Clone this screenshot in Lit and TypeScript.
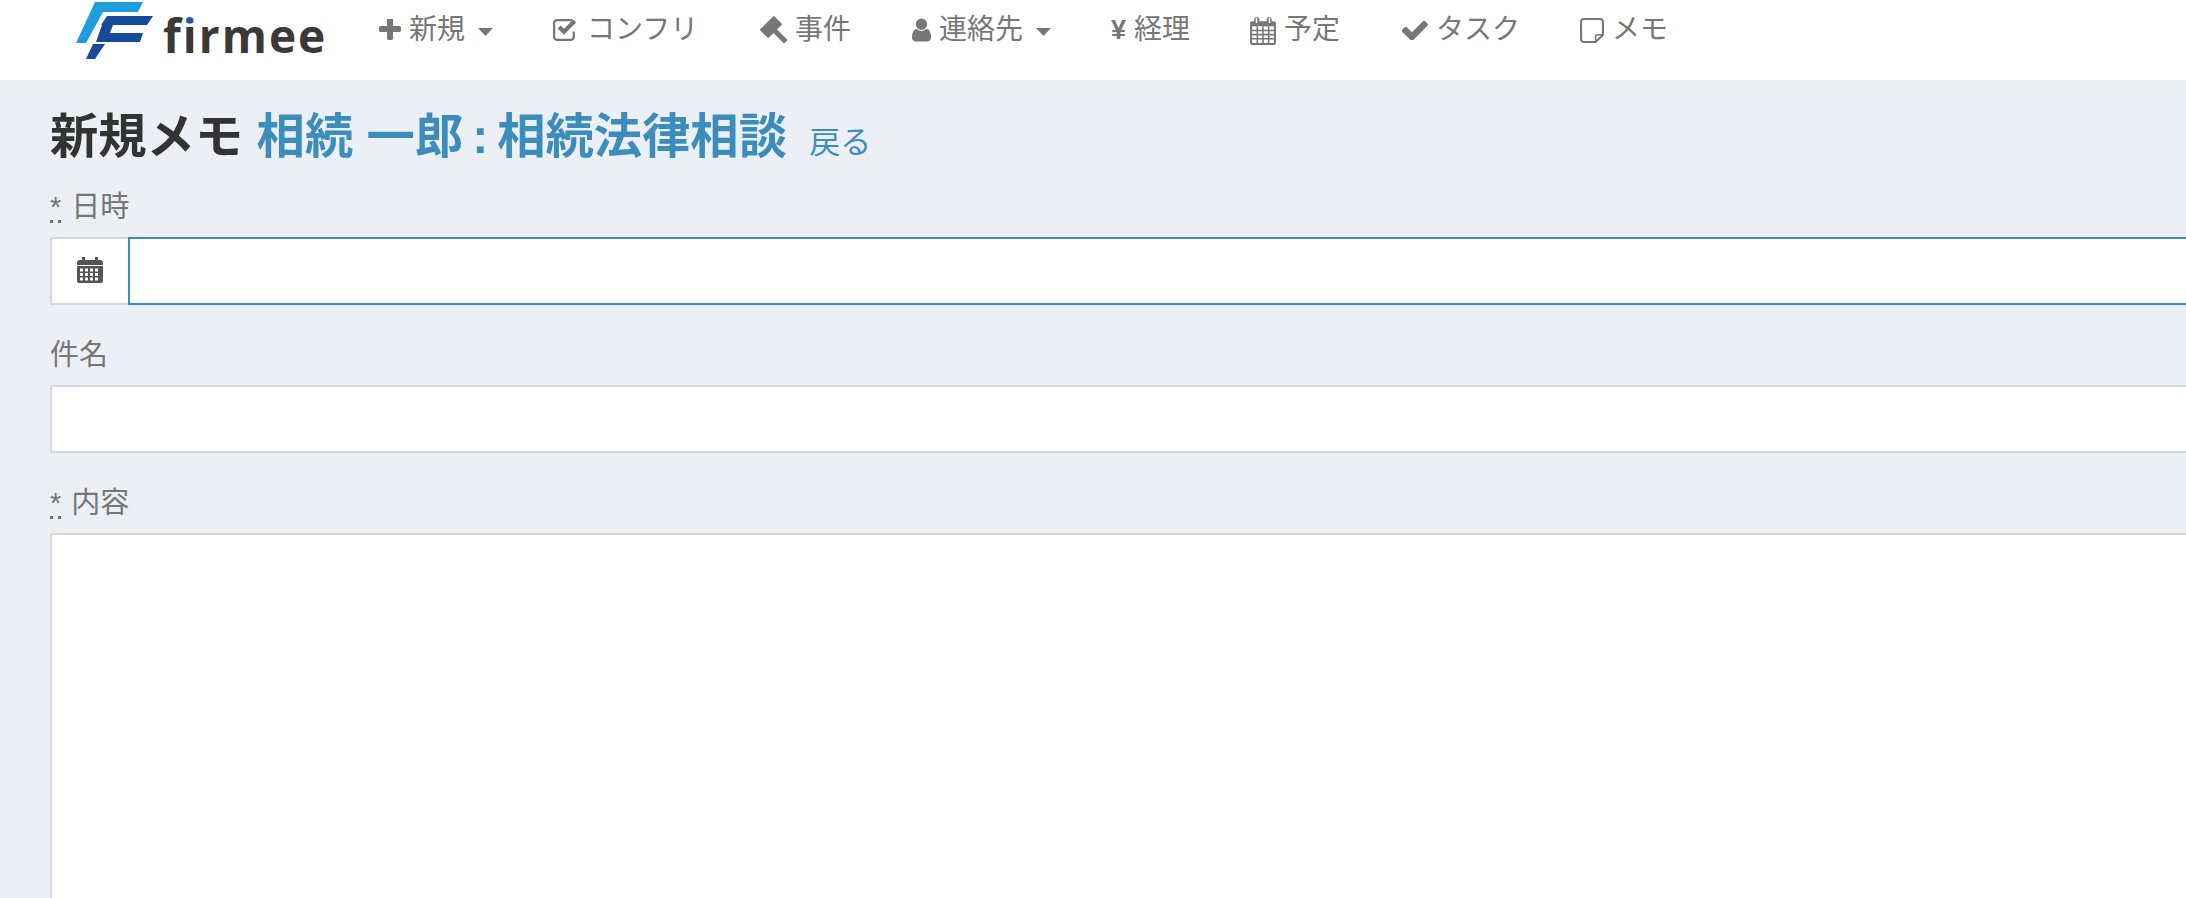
import { LitElement, css, html, svg } from 'lit';
import { customElement } from 'lit/decorators.js';

const icon = (w: number, h: number, vb: string, body: unknown) => html`
  <svg class="ic" width=${w} height=${h} viewBox=${vb} fill="currentColor">${body}</svg>
`;

const caret = svg`<path d="M0 0h15L7.500 8z" />`;

const icons = {
  plus: icon(22, 22, '192 192 1408 1408', svg`<path d="M1600 736v192q0 40-28 68t-68 28h-416v416q0 40-28 68t-68 28h-192q-40 0-68-28t-28-68v-416h-416q-40 0-68-28t-28-68v-192q0-40 28-68t68-28h416v-416q0-40 28-68t68-28h192q40 0 68 28t28 68v416h416q40 0 68 28t28 68z" />`),
  checkSquare: icon(26, 25, '1 1 25 24', svg`
    <path d="M21 14v5a3 3 0 0 1-3 3H5a3 3 0 0 1-3-3V6a3 3 0 0 1 3-3h13c.6 0 1.100.1 1.600.3" fill="none" stroke="currentColor" stroke-width="2.200" />
    <path d="M5.500 11l2.800-2.800 3.200 3.200 9-9 2.800 2.800L11.500 17z" />`),
  gavel: icon(27, 28, '0 0 27 28', svg`
    <rect x="1" y="5" width="20" height="12" rx="1" transform="rotate(-45 11 11)" />
    <rect x="11" y="8.500" width="21" height="5" rx="1.500" transform="rotate(45 11 11)" />`),
  user: icon(19, 26, '256 128 1280 1536', svg`<path d="M1536 1399q0 109-62.500 187t-150.500 78h-854q-88 0-150.500-78t-62.500-187q0-85 8.500-160.500t31.500-152 58.500-131 94-89 134.500-34.500q131 128 313 128t313-128q76 0 134.500 34.500t94 89 58.500 131 31.500 152 8.500 160.500zm-256-887q0 159-112.500 271.500t-271.500 112.500-271.500-112.500-112.500-271.500 112.500-271.500 271.500-112.500 271.500 112.500 112.500 271.500z" />`),
  calendarGrid: icon(26, 29, '0 0 25 28', svg`
    <path d="M2 5h2V3.500a2.500 2.500 0 0 1 5 0V5h7V3.500a2.500 2.500 0 0 1 5 0V5h2a2 2 0 0 1 2 2v19a2 2 0 0 1-2 2H2a2 2 0 0 1-2-2V7a2 2 0 0 1 2-2z" />
    <path d="M2 10h21v16H2z" fill="#fff" />
    <path d="M5.500 1.800h1.500v5H5.500zM18 1.800h1.500v5H18z" fill="#fff" />
    <path d="M2 14h21M2 18h21M2 22h21M7 10v16M12.500 10v16M18 10v16" stroke="currentColor" stroke-width="1.500" fill="none" />`),
  check: icon(26, 20, '128 320 1543 1120', svg`<path d="M1671 566q0 40-28 68l-724 724-136 136q-28 28-68 28t-68-28l-136-136-362-362q-28-28-28-68t28-68l136-136q28-28 68-28t68 28l294 295 656-657q28-28 68-28t68 28l136 136q28 28 28 68z" />`),
  note: icon(24, 25, '0 0 23 24', svg`
    <path d="M15 23H3.500A2.500 2.500 0 0 1 1 20.500v-17A2.500 2.500 0 0 1 3.500 1h16A2.500 2.500 0 0 1 22 3.500V16z" fill="none" stroke="currentColor" stroke-width="2" stroke-linejoin="round" />
    <path d="M15 23v-5a2 2 0 0 1 2-2h5" fill="none" stroke="currentColor" stroke-width="1.500" />`),
  calendar: icon(26, 27, '0 0 26 27', svg`
    <path d="M0 7a3 3 0 0 1 3-3h2V1h3v3h10V1h3v3h2a3 3 0 0 1 3 3v2H0z" />
    <path fill-rule="evenodd" d="M0 10h26v15a2 2 0 0 1-2 2H2a2 2 0 0 1-2-2zM3 12.500v3h3v-3zm5 0v3h3v-3zm5 0v3h3v-3zm5 0v3h3v-3zM3 17v3h3v-3zm5 0v3h3v-3zm5 0v3h3v-3zm5 0v3h3v-3zM3 21.500v3h3v-3zm5 0v3h3v-3zm5 0v3h3v-3zm5 0v3h3v-3z" />`),
};

const navItems = [
  { icon: icons.plus, label: '新規', dropdown: true, width: 174 },
  { icon: icons.checkSquare, label: 'コンフリ', width: 207 },
  { icon: icons.gavel, label: '事件', width: 152 },
  { icon: icons.user, label: '連絡先', dropdown: true, width: 199 },
  { icon: null, label: '経理', width: 139 },
  { icon: icons.calendarGrid, label: '予定', width: 152 },
  { icon: icons.check, label: 'タスク', width: 178 },
  { icon: icons.note, label: 'メモ', width: 120 },
];

@customElement('app-root')
export class AppRoot extends LitElement {
  static styles = css`
    :host {
      display: block;
      height: 100vh;
      overflow: hidden;
      background: #ecf0f5;
      font-family: 'Liberation Sans', 'Noto Sans CJK JP', sans-serif;
      color: #333;
    }

    .navbar {
      display: flex;
      height: 80px;
      background: #fff;
      padding-left: 75px;
      color: #777;
      font-size: 28px;
    }

    .logo {
      display: flex;
      width: 304px;
      height: 62px;
      gap: 10px;
      flex: none;
    }
    .logo svg {
      flex: none;
    }
    .wordmark {
      font-family: 'Open Sans', sans-serif;
      font-weight: 700;
      font-size: 46px;
      line-height: 1;
      color: #3d3838;
      margin-top: 12px;
      letter-spacing: 2px;
    }
    .wordmark .dot-i {
      background: linear-gradient(#1c5aa8 0 36%, #3d3838 36%);
      -webkit-background-clip: text;
      background-clip: text;
      color: transparent;
    }

    .nav-item {
      display: flex;
      align-items: center;
      gap: 8px;
      height: 60px;
      flex: none;
      box-sizing: border-box;
      white-space: nowrap;
      line-height: 60px;
    }
    .ic {
      flex: none;
      display: block;
    }
    .yen {
      font-weight: 700;
      font-size: 27px;
    }
    .caret {
      margin-left: 5px;
      margin-top: 3px;
    }

    main {
      padding-left: 50px;
    }
    h1 {
      height: 66px;
      margin: 23px 0 18px;
      font-size: 48.300px;
      line-height: 66px;
      font-weight: 700;
      white-space: nowrap;
    }
    h1 a {
      color: #3c8dbc;
      text-decoration: none;
    }
    h1 .colon {
      word-spacing: -4.500px;
    }
    h1 .back {
      font-size: 31px;
      font-weight: 400;
      margin-left: 9px;
    }

    .group {
      margin-bottom: 30px;
    }
    label {
      display: block;
      height: 40px;
      margin-bottom: 10px;
      font-size: 29px;
      line-height: 40px;
      color: #777;
    }
    abbr {
      display: inline-block;
      line-height: 25px;
      text-decoration: none;
      border-bottom: 3px dotted #777;
      margin-right: 2px;
    }

    input,
    textarea {
      display: block;
      width: 100%;
      box-sizing: border-box;
      margin: 0;
      padding: 12px 24px;
      background: #fff;
      border: 2px solid #d2d6de;
      border-right: 0;
      border-radius: 0;
      outline: none;
      font: inherit;
    }
    input {
      height: 68px;
    }
    textarea {
      height: 500px;
      resize: none;
    }

    .input-group {
      display: flex;
    }
    .addon {
      display: flex;
      align-items: center;
      justify-content: center;
      flex: none;
      width: 78px;
      height: 68px;
      box-sizing: border-box;
      padding-bottom: 4px;
      background: #fff;
      border: 2px solid #d2d6de;
      border-right: 0;
      color: #555;
    }
    .input-group input {
      flex: 1;
      min-width: 0;
      border-color: #3c8dbc;
    }
  `;

  renderLogo() {
    return html`
      <div class="logo">
        <svg width="78" height="62" viewBox="0 0 78 62">
          <path d="M20 2h48l-5 10H28L11 43H1z" fill="#1f9ede" />
          <path d="M32 16h46l-6 9H38l-3 8h33l-3 9H21l6-17h-1z" fill="#164b9b" />
          <path d="M18 44h12L20 59h-9z" fill="#164b9b" />
        </svg>
        <span class="wordmark">f<span class="dot-i">i</span>rmee</span>
      </div>
    `;
  }

  render() {
    return html`
      <nav class="navbar">
        ${this.renderLogo()}
        ${navItems.map(
          (item) => html`
            <div class="nav-item" style="width:${item.width}px">
              ${item.icon ?? html`<span class="yen">¥</span>`}
              <span>${item.label}</span>
              ${item.dropdown
                ? html`<svg class="ic caret" width="15" height="8" viewBox="0 0 15 8" fill="currentColor">${caret}</svg>`
                : ''}
            </div>
          `
        )}
      </nav>
      <main>
        <h1>
          新規メモ <a href="#">相続 一郎<span class="colon"> : </span>相続法律相談</a>
          <a class="back" href="#">戻る</a>
        </h1>
        <div class="group">
          <label><abbr title="required">*</abbr> 日時</label>
          <div class="input-group">
            <span class="addon">${icons.calendar}</span>
            <input type="text" />
          </div>
        </div>
        <div class="group">
          <label>件名</label>
          <input type="text" />
        </div>
        <div class="group">
          <label><abbr title="required">*</abbr> 内容</label>
          <textarea></textarea>
        </div>
      </main>
    `;
  }
}
